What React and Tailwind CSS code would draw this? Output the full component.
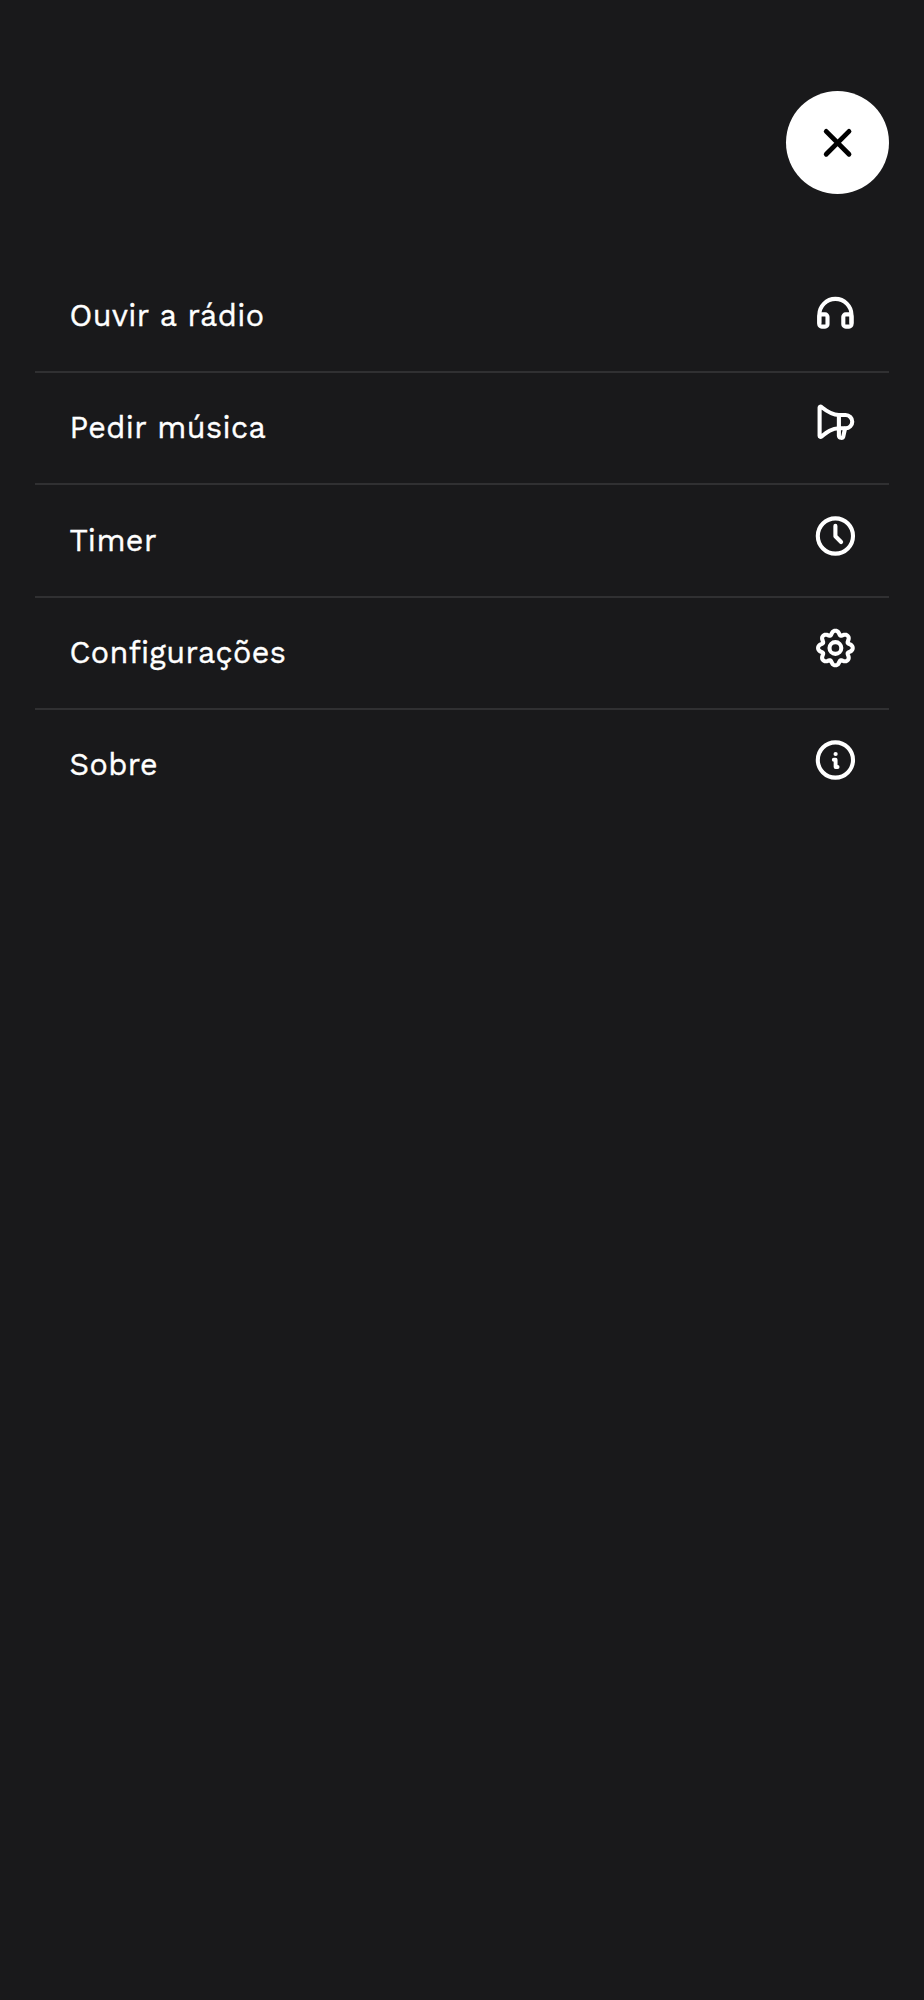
import React from "react";

// wavy outline of the settings gear, eight teeth
const gearPoints = Array.from({ length: 128 }, (_, i) => {
  const a = (i / 128) * Math.PI * 2;
  const r = 15.6 + 2 * Math.cos(8 * a) - 0.3 * Math.cos(16 * a);
  return `${(21 + r * Math.sin(a)).toFixed(2)},${(21 - r * Math.cos(a)).toFixed(2)}`;
}).join(" ");

function Icon({ children }) {
  return (
    <svg
      viewBox="-0.4 0 42 42"
      className="mt-[29.2px] h-[42px] w-[42px] shrink-0"
      fill="none"
      stroke="currentColor"
      strokeWidth="4.1"
      strokeLinecap="round"
      strokeLinejoin="round"
    >
      {children}
    </svg>
  );
}

const items = [
  {
    label: "Ouvir a rádio",
    icon: (
      <>
        <path d="M4.9 33V25a16.1 16.1 0 0 1 32.2 0v8" />
        <rect x="4.9" y="24.4" width="8.2" height="12.2" rx="2.4" />
        <rect x="28.9" y="24.4" width="8.2" height="12.2" rx="2.4" />
      </>
    ),
  },
  {
    label: "Pedir música",
    icon: (
      <>
        <path d="M5.2 5.6C5.2 4.6 6.2 4.4 7 5C12.5 9.4 17.5 13 24.5 13H31.2a6.6 6.6 0 0 1 0 13.3H24.5C17.5 26.3 12.5 30.2 7 34.6C6.2 35.2 5.2 35 5.2 34Z" />
        <path d="M24.5 13V33.8C24.8 36.4 28.4 36.4 28.9 34.4L30.6 26.7" />
      </>
    ),
  },
  {
    label: "Timer",
    icon: (
      <>
        <circle cx="21" cy="21" r="17.6" />
        <path d="M21 10.9V21.2L26.7 27" />
      </>
    ),
  },
  {
    label: "Configurações",
    icon: (
      <>
        <polygon points={gearPoints} />
        <circle cx="21" cy="21" r="5.9" />
      </>
    ),
  },
  {
    label: "Sobre",
    icon: (
      <>
        <circle cx="21" cy="21" r="17.6" />
        <circle cx="21.2" cy="15" r="2.1" fill="currentColor" stroke="none" />
        <path d="M19.4 20.8H21.2V28H23.2" strokeWidth="3.9" />
      </>
    ),
  },
];

export default function App() {
  return (
    <div className="min-h-[2000px] w-full bg-[#19191b] px-[35px] pt-[91px] font-['Work_Sans','Inter',sans-serif] text-white">
      <div className="flex justify-end">
        <button
          type="button"
          aria-label="Fechar"
          className="flex h-[103px] w-[103px] items-center justify-center rounded-full bg-white text-black"
        >
          <svg
            viewBox="0 0 32 32"
            className="h-8 w-8"
            fill="none"
            stroke="currentColor"
            strokeWidth="4.8"
            strokeLinecap="round"
          >
            <path d="M4.2 4.4L27 27.2M27 4.4L4.2 27.2" />
          </svg>
        </button>
      </div>
      <ul className="mt-[66.7px]">
        {items.map((item) => (
          <li
            key={item.label}
            className="flex h-[112.33px] justify-between border-b-2 border-[#303032] pr-[32.6px] pl-[34.5px] last:border-b-0"
          >
            <span className="mt-[35.4px] text-[30.5px] leading-[40px] tracking-[0.42px] whitespace-nowrap [-webkit-text-stroke:0.4px_white]">
              {item.label}
            </span>
            <Icon>{item.icon}</Icon>
          </li>
        ))}
      </ul>
    </div>
  );
}
